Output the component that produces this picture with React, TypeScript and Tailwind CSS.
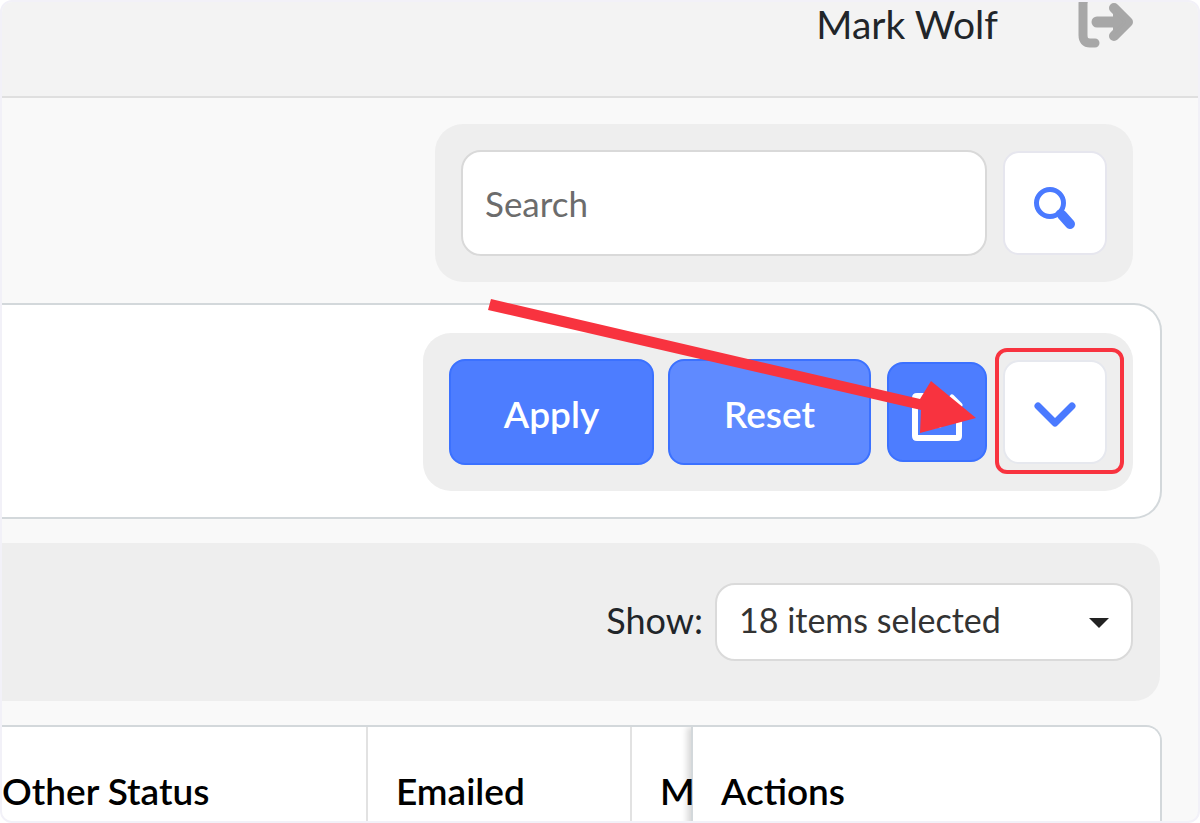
import { useState } from "react";

const columns = ["Other Status", "Emailed", "M", "Actions"];

function ExitIcon() {
  return (
    <svg viewBox="0 0 56 48" className="h-12 w-14 fill-none stroke-[#a7a7a7]" strokeLinecap="round" strokeLinejoin="round" aria-hidden="true">
      <path d="M17 -5H12Q5 -5 5 2V33Q5 41 12 41H17" strokeWidth="9" />
      <path d="M19 20H44" strokeWidth="11" />
      <path d="M36 6L50 20L36 34" strokeWidth="10" />
      <path d="M36 9L47 20L36 31Z" strokeWidth="2" className="fill-[#a7a7a7]" />
    </svg>
  );
}

function SearchIcon() {
  return (
    <svg viewBox="0 0 44 44" className="mt-2.5 size-11 fill-none stroke-[#4a7aff]" strokeLinecap="round" aria-hidden="true">
      <circle cx="17" cy="17" r="13.5" strokeWidth="5" />
      <path d="M29 29L37 38" strokeWidth="10" />
      <path d="M26 27L30 31" strokeWidth="6" />
    </svg>
  );
}

function EditIcon() {
  return (
    <svg viewBox="0 0 52 52" className="mt-2.5 size-13 fill-none stroke-white" strokeLinejoin="round" strokeLinecap="round" aria-hidden="true">
      <path d="M28 5H6Q4 5 4 7V45Q4 47 6 47H46Q48 47 48 45V26" strokeWidth="6" />
      <path d="M22 35L24 26L41 6L49 14L29 34Z" strokeWidth="5" />
    </svg>
  );
}

function ChevronIcon() {
  return (
    <svg viewBox="0 0 44 28" className="mt-1.5 h-7 w-11 fill-none stroke-[#4a7aff]" strokeLinecap="round" strokeLinejoin="round" aria-hidden="true">
      <path d="M5 5L22 22L39 5" strokeWidth="7" />
    </svg>
  );
}

export default function App() {
  const [query, setQuery] = useState("");
  return (
    <div className="bg-white font-['Lato',sans-serif] text-[#212529]">
      <div className="flex h-screen flex-col overflow-hidden rounded-xl border-2 border-[#f2f1f8] bg-[#f9f9f9]">
        <header className="flex h-24 shrink-0 items-start justify-end border-b-2 border-[#dfdfdf] bg-[#f3f3f3] pr-16">
          <span className="mr-20 text-[39px] leading-11">Mark Wolf</span>
          <button type="button" aria-label="Log out">
            <ExitIcon />
          </button>
        </header>

        <main className="flex min-h-0 grow flex-col pr-9">
          <form className="mt-[26px] mr-[29px] flex shrink-0 items-center gap-4 self-end rounded-[28px] bg-[#eeeeee] p-[26px]" onSubmit={(e) => e.preventDefault()}>
            <input
              type="text"
              aria-label="Search"
              placeholder="Search"
              value={query}
              onChange={(e) => setQuery(e.target.value)}
              className="h-[106px] w-[526px] rounded-[20px] border-2 border-[#d9d9d9] bg-white px-[22px] text-[35px] outline-none placeholder:text-[#6c6c6c]"
            />
            <button type="submit" aria-label="Run search" className="flex size-26 items-center justify-center rounded-2xl border-2 border-[#e6e6ee] bg-white">
              <SearchIcon />
            </button>
          </form>

          <section className="relative mt-[21px] flex shrink-0 justify-end rounded-r-[28px] border-2 border-l-0 border-[#d3d8db] bg-white pt-7 pr-[27px] pb-[26px]">
            <div className="flex items-center rounded-[28px] bg-[#eeeeee] p-[26px]">
              <button type="button" className="h-[106px] w-[205px] rounded-2xl border-2 border-[#3b71ff] bg-[#4d7dff] pt-1 text-[37px] font-semibold text-white">
                Apply
              </button>
              <button type="button" className="ml-3.5 h-[106px] w-[203px] rounded-2xl border-2 border-[#3b71ff] bg-[#5f8aff] pt-1 text-[37px] font-semibold text-white">
                Reset
              </button>
              <button type="button" aria-label="Edit filter" className="ml-4 flex size-25 items-center justify-center rounded-2xl border-2 border-[#3b71ff] bg-[#4d7dff]">
                <EditIcon />
              </button>
              <div className="relative ml-4">
                <button type="button" aria-label="More filters" className="flex size-26 items-center justify-center rounded-2xl border-2 border-[#e6e8ee] bg-white">
                  <ChevronIcon />
                </button>
                <span className="pointer-events-none absolute -top-3 -right-[17px] -bottom-2.5 -left-2 rounded-xl border-4 border-[#f8333f]" />
              </div>
            </div>
            <svg viewBox="0 0 490 140" className="pointer-events-none absolute -top-1.5 right-[182px] h-[140px] w-[490px] fill-[#f8333f]" aria-hidden="true">
              <path d="M3 0L432 100L443 82L488 119L432 134L433 111L0 11Z" />
            </svg>
          </section>

          <section className="mt-6 mr-0.5 flex shrink-0 items-center justify-end rounded-r-[26px] bg-[#eeeeee] py-10 pr-[27px]">
            <label htmlFor="shown" className="mr-3 pb-1 text-[36px] leading-10">Show:</label>
            <div className="relative">
              <select id="shown" className="h-[78px] w-[418px] appearance-none rounded-[20px] border-2 border-[#dadada] bg-white px-[22px] pb-1.5 text-[34px] text-[#333333] outline-none">
                <option>18 items selected</option>
              </select>
              <svg viewBox="0 0 20 10" className="pointer-events-none absolute top-[35px] right-6 h-2.5 w-5 fill-[#222222]" aria-hidden="true">
                <path d="M0 0H20L10 10Z" />
              </svg>
            </div>
          </section>

          <div className="mt-6 grow overflow-hidden rounded-tr-2xl border-t-2 border-r-2 border-[#d3d8db] bg-white">
            <table className="w-full table-fixed border-separate border-spacing-0 text-left text-[37px] text-black">
              <thead>
                <tr>
                  <th scope="col" className="h-32 border-r-2 border-[#e2e2e2] p-0 font-semibold">{columns[0]}</th>
                  <th scope="col" className="w-[264px] border-r-2 border-[#e2e2e2] pl-7 font-semibold">{columns[1]}</th>
                  <th scope="col" className="w-[59px] pl-7 font-semibold">{columns[2]}</th>
                  <th scope="col" className="w-[469px] border-l-2 border-[#d3d8db] bg-white pl-7 font-semibold shadow-[-4px_0_6px_rgba(0,0,0,0.15)]">{columns[3]}</th>
                </tr>
              </thead>
            </table>
          </div>
        </main>
      </div>
    </div>
  );
}
